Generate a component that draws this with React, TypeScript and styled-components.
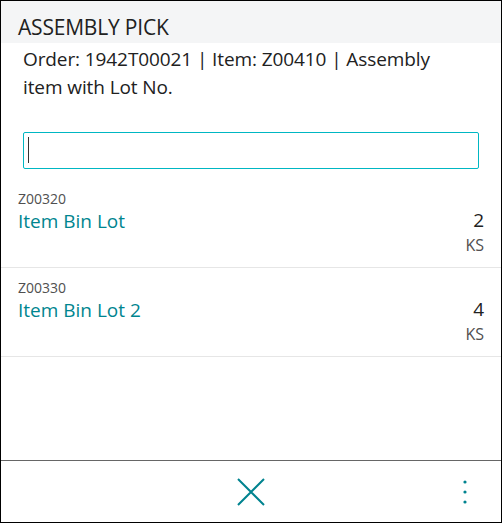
import styled, { createGlobalStyle } from 'styled-components'

const GlobalStyle = createGlobalStyle`
  html, body {
    margin: 0;
    padding: 0;
    background: #fff;
  }
  * {
    box-sizing: border-box;
  }
`

const Frame = styled.div`
  width: 502px;
  height: 523px;
  border: 1px solid #000;
  display: flex;
  flex-direction: column;
  background: #fff;
  font-family: 'Open Sans', 'Noto Sans', sans-serif;
  color: #212121;
`

const Header = styled.div`
  height: 42px;
  flex: 0 0 42px;
  background: #f4f5f6;
  padding: 9px 17px 0;
  display: flex;
  align-items: center;
  font-size: 21px;
  letter-spacing: -0.2px;
`

const Description = styled.div`
  padding: 2px 50px 0 22px;
  font-size: 19px;
  line-height: 28px;
  letter-spacing: -0.1px;
`

const SearchWrap = styled.div`
  position: relative;
  padding: 31px 22px 0;
`

const SearchInput = styled.input`
  display: block;
  width: 100%;
  height: 37px;
  border: 1px solid #00b7c3;
  border-radius: 2px;
  outline: none;
  padding: 0 4px;
  font-family: inherit;
  font-size: 18px;
  caret-color: #212121;
`

const Caret = styled.span`
  position: absolute;
  left: 27px;
  top: 36px;
  width: 1px;
  height: 26px;
  background: #333;
  pointer-events: none;
`

const List = styled.div`
  flex: 1;
  padding-top: 10px;
`

const Row = styled.div`
  height: 89px;
  padding: 11px 17px 0;
  border-bottom: 1px solid #e6e6e6;
  display: flex;
  justify-content: space-between;
`

const Left = styled.div`
  display: flex;
  flex-direction: column;
`

const Right = styled.div`
  display: flex;
  flex-direction: column;
  align-items: flex-end;
  padding-top: 17px;
`

const Code = styled.div`
  font-size: 14px;
  line-height: 18px;
  color: #505050;
`

const Title = styled.div`
  font-size: 19px;
  line-height: 26px;
  color: #00858f;
`

const Qty = styled.div`
  font-size: 19px;
  line-height: 26px;
  color: #212121;
`

const Unit = styled.div`
  font-size: 16px;
  line-height: 24px;
  color: #505050;
`

const Footer = styled.div`
  flex: 0 0 62px;
  border-top: 1px solid #666;
  display: grid;
  grid-template-columns: 1fr auto 1fr;
  align-items: center;
`

const IconButton = styled.button<{ $end?: boolean }>`
  background: none;
  border: none;
  padding: 0;
  margin-right: ${(p) => (p.$end ? '34px' : '0')};
  cursor: pointer;
  justify-self: ${(p) => (p.$end ? 'end' : 'center')};
  display: flex;
  align-items: center;
  justify-content: center;
  color: #00838f;
`

const items = [
  { code: 'Z00320', name: 'Item Bin Lot', qty: 2, unit: 'KS' },
  { code: 'Z00330', name: 'Item Bin Lot 2', qty: 4, unit: 'KS' },
]

export default function App() {
  return (
    <>
      <GlobalStyle />
      <Frame>
        <Header>ASSEMBLY PICK</Header>
        <Description>
          Order: 1942T00021 | Item: Z00410 | Assembly item with Lot No.
        </Description>
        <SearchWrap>
          <SearchInput />
          <Caret />
        </SearchWrap>
        <List>
          {items.map((it) => (
            <Row key={it.code}>
              <Left>
                <Code>{it.code}</Code>
                <Title>{it.name}</Title>
              </Left>
              <Right>
                <Qty>{it.qty}</Qty>
                <Unit>{it.unit}</Unit>
              </Right>
            </Row>
          ))}
        </List>
        <Footer>
          <span />
          <IconButton>
            <svg width="28" height="28" viewBox="0 0 28 28">
              <path d="M1 1 L27 27 M27 1 L1 27" stroke="currentColor" strokeWidth="2" fill="none" />
            </svg>
          </IconButton>
          <IconButton $end>
            <svg width="4" height="24" viewBox="0 0 4 24">
              <circle cx="2" cy="2" r="1.6" fill="currentColor" />
              <circle cx="2" cy="12" r="1.6" fill="currentColor" />
              <circle cx="2" cy="22" r="1.6" fill="currentColor" />
            </svg>
          </IconButton>
        </Footer>
      </Frame>
    </>
  )
}
